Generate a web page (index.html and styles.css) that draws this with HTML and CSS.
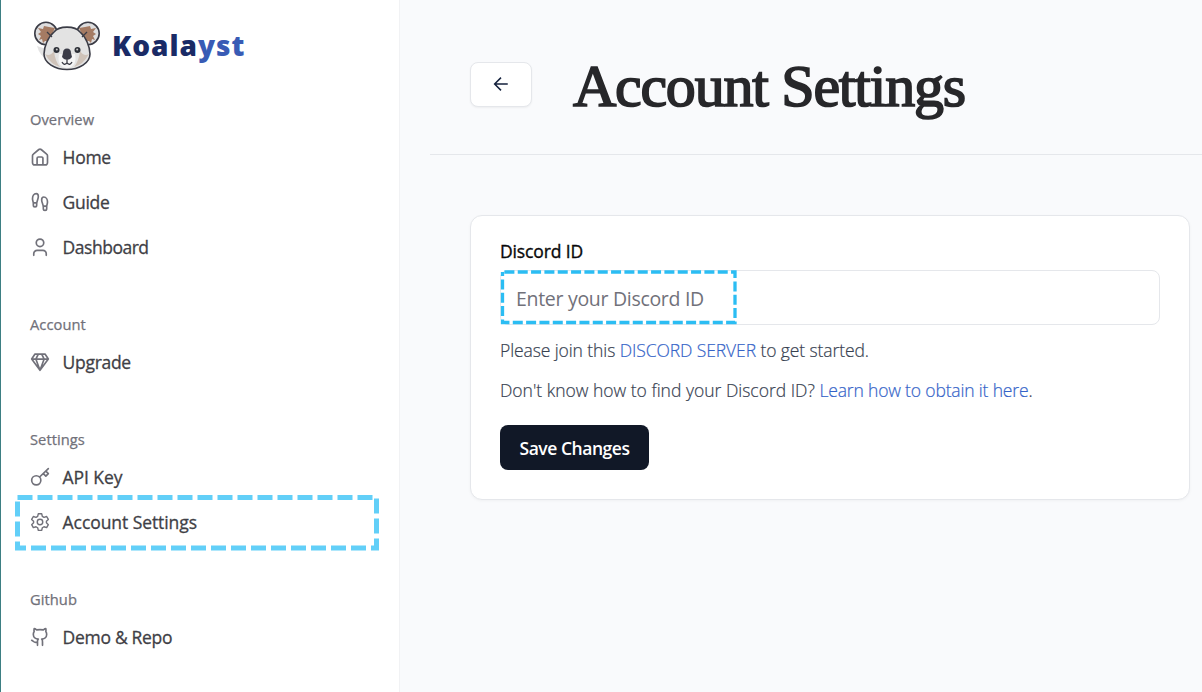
FILE: index.html
```
<!DOCTYPE html>
<html lang="en">
<head>
<meta charset="utf-8">
<title>Koalayst</title>
<link rel="stylesheet" href="styles.css">
</head>
<body>
<aside class="sidebar">
  <div class="brand">
    <svg class="brand-logo" viewBox="0 0 70 54">
      <path d="M5 27 Q8 38 16 40 L14 30Z" fill="#e4e4e4"/>
      <g stroke="#3b3c46" stroke-width="1.6">
        <circle cx="14" cy="14.500" r="11.200" fill="#dededf"/>
        <circle cx="56" cy="14.500" r="11.200" fill="#dededf"/>
      </g>
      <path d="M6 9 L11 10 L12 7 L17 8 L23 9 L17 22 L13 22 L11 24 L10 20 L7 21 L9 17 L6 15 L9 13Z" fill="#a57b63"/>
      <path d="M64 9 L59 10 L58 7 L53 8 L47 9 L53 22 L57 22 L59 24 L60 20 L63 21 L61 17 L64 15 L61 13Z" fill="#a57b63"/>
      <path d="M22 13 C27 6.500 43 6.500 48 13 C54 18 58 28 58 35 C58 44 47 50.500 35 50.500 C23 50.500 12 44 12 35 C12 28 16 18 22 13Z" fill="#e3e3e3" stroke="#3b3c46" stroke-width="1.6"/>
      <path d="M13 35 Q19 46 28 48 Q23 42 22 32 Q18 38 13 35Z" fill="#cfc3b9"/>
      <path d="M57 35 Q51 46 42 48 Q47 42 48 32 Q52 38 57 35Z" fill="#cfc3b9"/>
      <path d="M27 35 Q25 45 31 48 Q35 50 39 48 Q45 45 43 35Z" fill="#f5f5f5"/>
      <circle cx="24.500" cy="31" r="3" fill="#2d3038"/><circle cx="45.500" cy="31" r="3" fill="#2d3038"/>
      <circle cx="24.800" cy="30.500" r="1" fill="#c8c8c8"/><circle cx="45.200" cy="30.500" r="1" fill="#c8c8c8"/>
      <path d="M31 34 Q31 29.500 35 29.500 Q39 29.500 39 34 L40 38 Q38 41 35 41 Q32 41 30 38Z" fill="#3b3c48"/>
      <path d="M35 41V44M30 43Q32 47 35 44Q38 47 40 43M15 13L20 18M55 13L50 18" fill="none" stroke="#3b3c46" stroke-width="1.300"/>
    </svg>
    <span class="brand-name">Koala<span class="brand-accent">yst</span></span>
  </div>
  <nav class="nav">
    <section class="group">
      <h2 class="group-title">Overview</h2>
      <a class="item"><svg class="icon" viewBox="0 0 24 24"><path d="M3 10.500a2.500 2.500 0 0 1 1-2L10.600 3a2.200 2.200 0 0 1 2.800 0L20 8.500a2.500 2.500 0 0 1 1 2V19a2.500 2.500 0 0 1-2.500 2.500h-13A2.500 2.500 0 0 1 3 19zM8.500 21v-7.500a1.500 1.500 0 0 1 1.500-1.500h4a1.500 1.500 0 0 1 1.500 1.500V21"/></svg>Home</a>
      <a class="item"><svg class="icon" viewBox="0 0 24 24"><path d="M4 16v-2.380C4 11.500 2.970 10.500 3 8c.03-2.720 1.490-6 4.500-6C9.370 2 10 3.800 10 5.500c0 3.110-2 5.660-2 8.680V16a2 2 0 1 1-4 0ZM20 20v-2.380c0-2.120 1.030-3.120 1-5.620-.03-2.720-1.490-6-4.500-6C14.630 6 14 7.800 14 9.500c0 3.110 2 5.660 2 8.680V20a2 2 0 1 0 4 0ZM16 17h4M4 13h4"/></svg>Guide</a>
      <a class="item item-tight"><svg class="icon" viewBox="0 0 24 24"><circle cx="12" cy="7" r="4.500"/><path d="M4.500 22v-2a4 4 0 0 1 4-4h7a4 4 0 0 1 4 4v2"/></svg>Dashboard</a>
    </section>
    <section class="group">
      <h2 class="group-title">Account</h2>
      <a class="item"><svg class="icon" viewBox="0 0 24 24"><path d="M6 2.500h12l4 6L12 22 2 8.500zM2 8.500h20M10 2.500l-3 6L12 22l5-13.500-3-6"/></svg>Upgrade</a>
    </section>
    <section class="group">
      <h2 class="group-title">Settings</h2>
      <a class="item item-wide"><svg class="icon" viewBox="0 0 24 24"><circle cx="7.500" cy="16" r="5.500"/><path d="M11.500 12 22 2M16 8l3 3 3-3-3-3"/></svg>API Key</a>
      <a class="item item-wide"><svg class="icon icon-gear" viewBox="0 0 24 24"><circle cx="12" cy="12" r="3.300"/><path d="M10 2h4l.8 3.200 2 1.200 3.200-1 2 3.500L19.700 11v2l2.300 2.200-2 3.500-3.200-1-2 1.200L14 22h-4l-.8-3.100-2-1.200-3.200 1-2-3.500L4.300 13v-2L2 8.900l2-3.500 3.200 1 2-1.200z"/></svg>Account Settings
        <svg class="marker marker-nav" viewBox="0 0 370 60"><path d="M5.500 5.500H364.500V56H5.500Z"/></svg></a>
    </section>
    <section class="group">
      <h2 class="group-title">Github</h2>
      <a class="item"><svg class="icon" viewBox="0 0 24 24"><path d="M15 22v-4a4.800 4.800 0 0 0-1-3.500c3 0 6-2 6-5.500.08-1.250-.27-2.480-1-3.500.28-1.150.28-2.350 0-3.500 0 0-1 0-3 1.500-2.640-.5-5.360-.5-8 0C6 2 5 2 5 2c-.3 1.150-.3 2.350 0 3.500A5.400 5.400 0 0 0 4 9c0 3.500 3 5.500 6 5.500-.39.49-.68 1.050-.85 1.650-.17.600-.22 1.230-.15 1.850v4M9 18c-4.510 2-5-2-7-2"/></svg>Demo &amp; Repo</a>
    </section>
  </nav>
</aside>
<main class="main">
  <header class="header">
    <button class="back" aria-label="Back"><svg class="back-icon" viewBox="0 0 24 24"><path d="M21 12H4M12 3.500 3.500 12l8.500 8.500"/></svg></button>
    <h1 class="title">Account Settings</h1>
  </header>
  <section class="card">
    <label class="label">Discord ID</label>
    <div class="field">Enter your Discord ID
      <svg class="marker marker-field" viewBox="0 0 240 58"><path d="M3.500 3H236V53.500H3.500Z"/></svg>
    </div>
    <p class="text text-join">Please join this <a class="link">DISCORD SERVER</a> to get started.</p>
    <p class="text">Don't know how to find your Discord ID? <a class="link link-learn">Learn how to obtain it here</a>.</p>
    <button class="save">Save Changes</button>
  </section>
</main>
</body>
</html>
```
FILE: styles.css
```
* { box-sizing: border-box; }
body { margin: 0; width: 1202px; height: 692px; overflow: hidden; display: flex; background: #f9fafc; font-family: "Open Sans", "Noto Sans", sans-serif; }
h1, h2, p { margin: 0; }

.sidebar { width: 400px; background: #fff; border-left: 1px solid #3d7f83; border-right: 1px solid #f1f2f4; padding-left: 29px; }
.brand { height: 104px; padding: 19px 0 0 2px; display: flex; align-items: flex-start; }
.brand-logo { width: 70px; height: 54px; }
.brand-name { margin-left: 10px; font-size: 28px; line-height: 52px; font-weight: 800; letter-spacing: 1px; color: #1a2b66; }
.brand-accent { color: #385bb5; }
.group { margin-bottom: 39px; }
.group-title { height: 31px; font-size: 14.7px; line-height: 31px; font-weight: 400; letter-spacing: .05px; -webkit-text-stroke: .25px #71717a; color: #71717a; }
.item { position: relative; height: 45px; padding-bottom: 1px; display: flex; align-items: center; gap: 12.6px; font-size: 17.5px; letter-spacing: -.3px; -webkit-text-stroke: .3px #3f3f46; color: #3f3f46; white-space: nowrap; }
.item-tight { letter-spacing: -.48px; }
.item-wide { letter-spacing: -.07px; }
.icon { width: 20px; height: 20px; fill: none; stroke: #71717a; stroke-width: 2; stroke-linecap: round; stroke-linejoin: round; }
.icon-gear { stroke-width: 1.7; }
.marker { position: absolute; fill: none; }
.marker-nav { left: -18px; top: -8px; width: 370px; height: 60px; stroke: #62cff8; stroke-width: 5; stroke-dasharray: 15 5; }

.main { flex: 1; padding-left: 30px; }
.header { height: 155px; padding-left: 40px; border-bottom: 1px solid #e5e7eb; display: flex; align-items: flex-start; }
.back { margin-top: 62px; width: 62px; height: 45px; padding: 0 0 2px; display: grid; place-items: center; background: #fff; border: 1px solid #e5e7eb; border-radius: 8px; box-shadow: 0 1px 2px rgba(0,0,0,.05); }
.back-icon { width: 18px; height: 18px; fill: none; stroke: #14213d; stroke-width: 2; }
.title { margin: 48px 0 0 41px; font-family: "Liberation Serif", serif; font-size: 60px; line-height: 76px; font-weight: 400; letter-spacing: -1.24px; color: #27272a; -webkit-text-stroke: 1.7px #27272a; white-space: nowrap; }
.card { margin: 60px 0 0 40px; width: 720px; height: 285px; padding: 23px 29px 0; background: #fff; border: 1px solid #e5e7eb; border-radius: 12px; box-shadow: 0 1px 3px rgba(0,0,0,.04); }
.label { display: block; height: 31px; font-size: 17.5px; line-height: 24px; letter-spacing: -.14px; -webkit-text-stroke: .35px #09090b; color: #09090b; }
.field { position: relative; height: 55px; padding-left: 15px; line-height: 56px; font-size: 19.5px; letter-spacing: -.3px; color: #71717a; border: 1px solid #e5e7eb; border-radius: 8px; }
.marker-field { left: -2px; top: -2px; width: 240px; height: 58px; stroke: #2bbdf3; stroke-width: 3.3; stroke-dasharray: 10 3.333; stroke-dashoffset: -1.9; }
.text { height: 40px; line-height: 50px; font-size: 17.5px; font-weight: 300; color: #374151; -webkit-text-stroke: .2px; white-space: pre; }
.text-join { letter-spacing: -.095px; }
.link { color: #3463c8; }
.link-learn { letter-spacing: -.16px; }
.save { margin-top: 20px; width: 149px; height: 45px; padding: 0; border: 0; border-radius: 8px; background: #111827; color: #fff; font: 600 17.5px "Open Sans", sans-serif; letter-spacing: -.46px; }
```
